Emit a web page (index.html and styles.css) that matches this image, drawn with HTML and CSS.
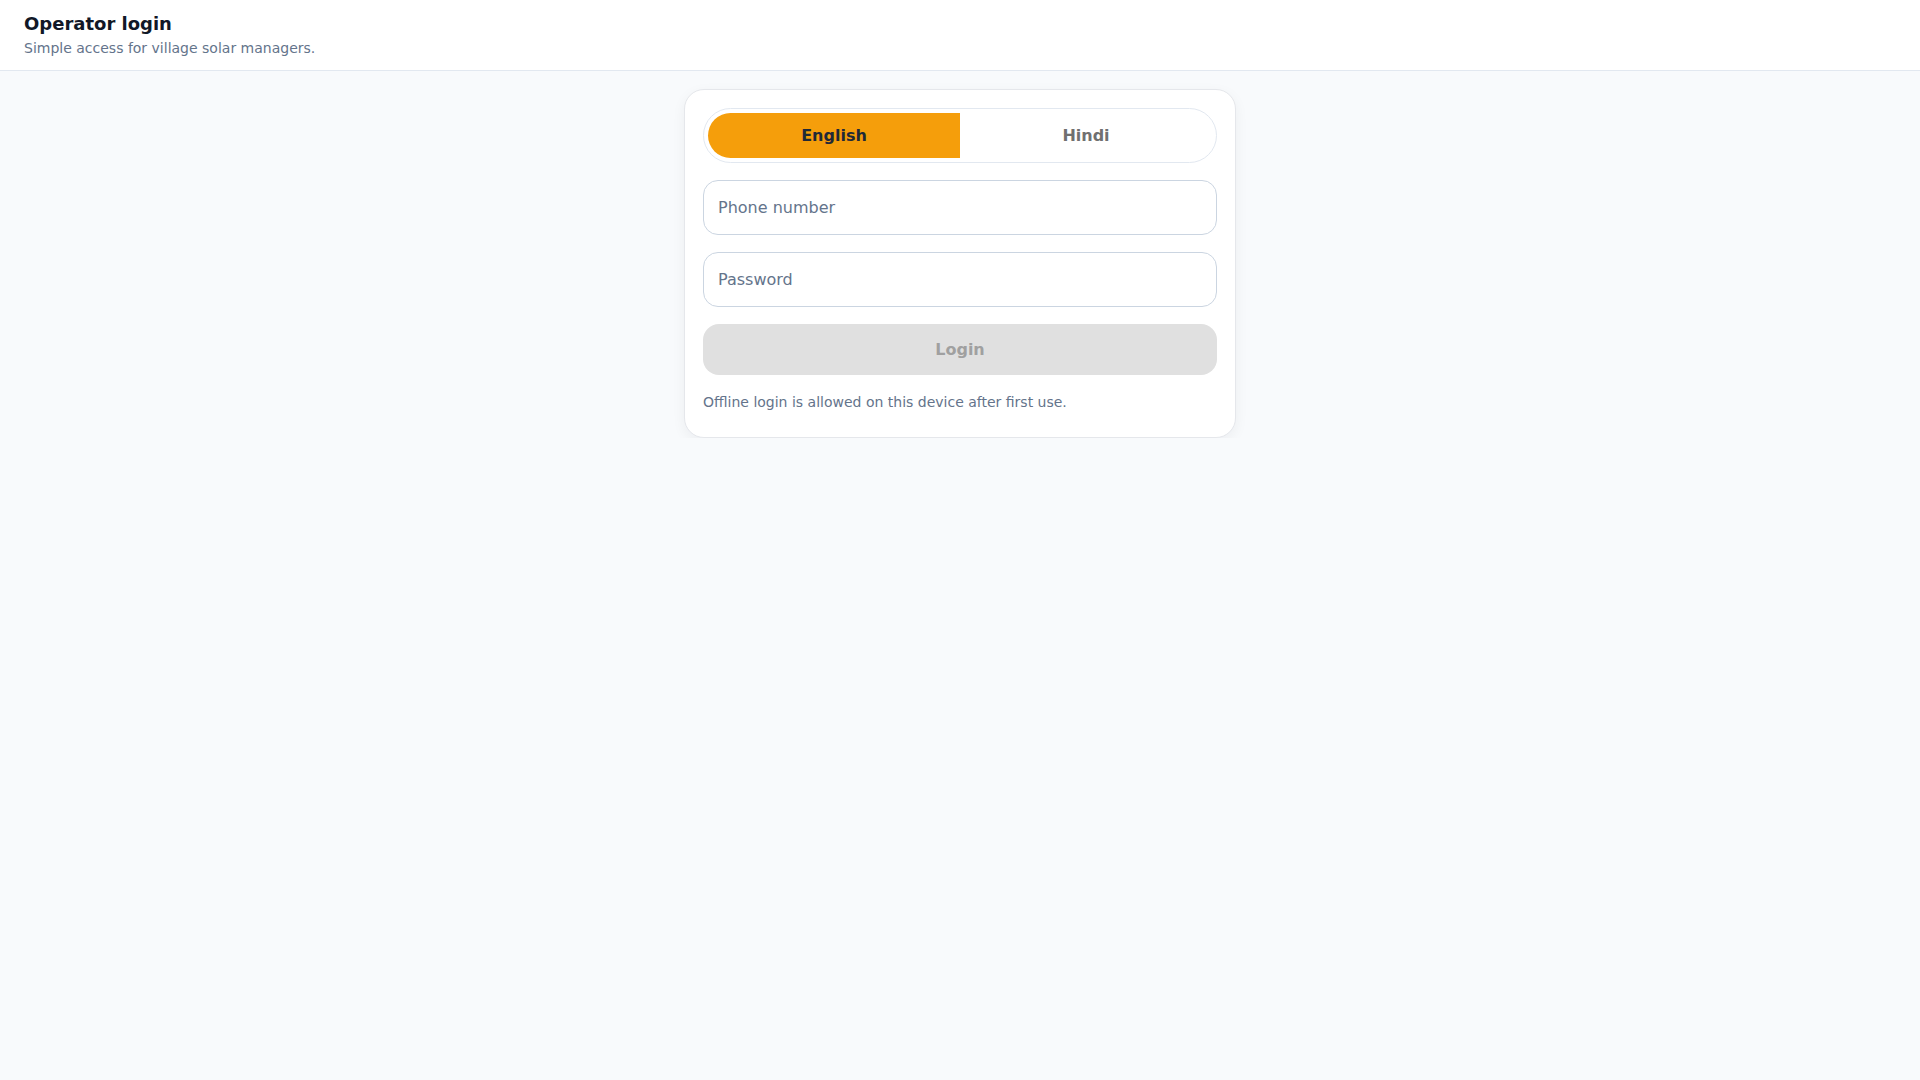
FILE: index.html
```html
<!DOCTYPE html>
<html lang="en">
    <head>
        <meta charset="UTF-8" />
        <meta name="viewport" content="width=device-width, initial-scale=1.0" />
        <title>Operator login</title>
        <link rel="stylesheet" href="styles.css">
    </head>
    <body>
        <!-- Page header -->
        <header class="topbar">
            <h1 class="title">Operator login</h1>
            <p class="subtitle">Simple access for village solar managers.</p>
        </header>

        <!-- Login card -->
        <main class="card">
            <div class="lang-toggle">
                <button type="button" class="lang lang-left active">English</button>
                <button type="button" class="lang lang-right">Hindi</button>
            </div>

            <input class="field" type="tel" placeholder="Phone number" />
            <input class="field" type="password" placeholder="Password" />

            <button type="button" class="login" disabled>Login</button>

            <p class="note">Offline login is allowed on this device after first use.</p>
        </main>
    </body>
</html>
```

FILE: styles.css
```css
* {
    box-sizing: border-box;
}

html {
    background-color: #f8fafc;
}

body {
    margin: 0;
    font-family: "DejaVu Sans", sans-serif;
    color: #0f172a;
}

.topbar {
    background-color: #ffffff;
    border-bottom: 1px solid #e2e8f0;
    padding: 13px 24px 14px;
}

.title {
    margin: 0;
    font-size: 18px;
    line-height: 21px;
    font-weight: bold;
    color: #111827;
}

.subtitle {
    margin: 6px 0 0;
    font-size: 14px;
    line-height: 16px;
    color: #64748b;
}

.card {
    display: flex;
    flex-direction: column;
    gap: 17px;
    width: 552px;
    margin: 18px auto 0;
    padding: 18px 18px 25px;
    background-color: #ffffff;
    border: 1px solid #e5e7eb;
    border-radius: 20px;
    box-shadow: 0 4px 14px rgba(15, 23, 42, 0.05);
}

.lang-toggle {
    display: grid;
    grid-template-columns: 1fr 1fr;
    height: 55px;
    padding: 4px;
    border: 1px solid #e2e8f0;
    border-radius: 999px;
    background-color: #ffffff;
}

.lang {
    border: none;
    background: transparent;
    font-family: inherit;
    font-size: 16px;
    font-weight: bold;
    color: #707070;
    cursor: pointer;
}

.lang.active {
    background-color: #f59e0b;
    color: #1f2937;
}

.lang-left.active {
    border-radius: 999px 0 0 999px;
}

.lang-right.active {
    border-radius: 0 999px 999px 0;
}

.field {
    height: 55px;
    padding: 0 14px;
    border: 1px solid #cbd5e1;
    border-radius: 15px;
    font-family: inherit;
    font-size: 16px;
    color: #0f172a;
    background-color: #ffffff;
    outline: none;
}

.field::placeholder {
    color: #64748b;
}

.login {
    height: 51px;
    border: none;
    border-radius: 16px;
    background-color: #e0e0e0;
    color: #a0a0a0;
    font-family: inherit;
    font-size: 16px;
    font-weight: bold;
}

.note {
    margin: 0;
    font-size: 14px;
    line-height: 20px;
    color: #64748b;
}
```
